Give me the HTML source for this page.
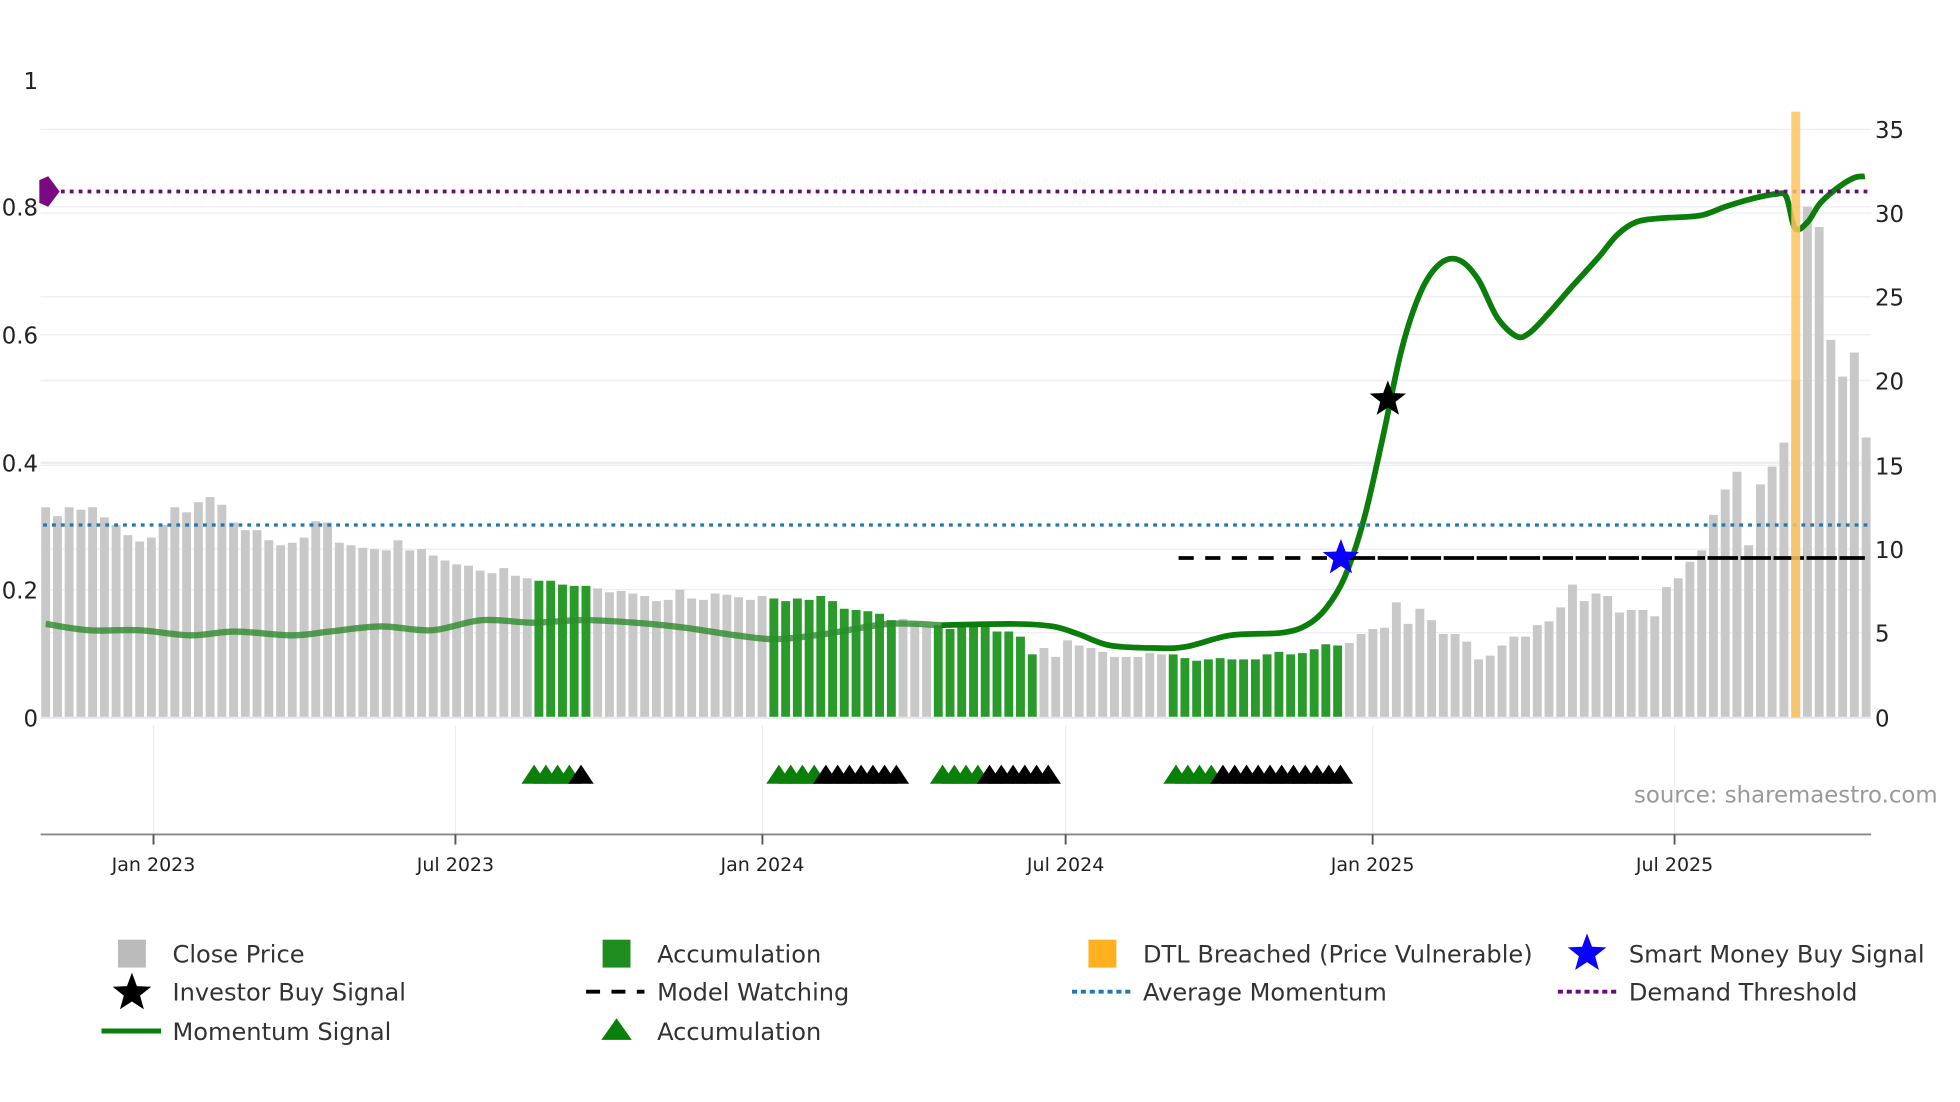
<!DOCTYPE html>
<html><head><meta charset="utf-8"><style>
html,body{margin:0;padding:0;background:#fff;}
svg{display:block;font-family:"DejaVu Sans","Liberation Sans",sans-serif;}
</style></head><body>
<svg id="s" width="1960" height="1102" viewBox="0 0 1545 869" preserveAspectRatio="none" xmlns="http://www.w3.org/2000/svg">
<g stroke="#eceef3" stroke-width="1">
<line x1="32" y1="102" x2="1475" y2="102"/><line x1="32" y1="168" x2="1475" y2="168"/><line x1="32" y1="234" x2="1475" y2="234"/><line x1="32" y1="300" x2="1475" y2="300"/><line x1="32" y1="367" x2="1475" y2="367"/><line x1="32" y1="433" x2="1475" y2="433"/><line x1="32" y1="499" x2="1475" y2="499"/>
<line x1="32" y1="163" x2="1475" y2="163"/><line x1="32" y1="264" x2="1475" y2="264"/><line x1="32" y1="365" x2="1475" y2="365" stroke-width="2"/><line x1="32" y1="465" x2="1475" y2="465"/>
<line x1="121" y1="572" x2="121" y2="658"/><line x1="359" y1="572" x2="359" y2="658"/><line x1="601" y1="572" x2="601" y2="658"/><line x1="840" y1="572" x2="840" y2="658"/><line x1="1082" y1="572" x2="1082" y2="658"/><line x1="1320" y1="572" x2="1320" y2="658"/>
</g>
<g id="bars"></g>
<line x1="32" y1="566" x2="1475" y2="566" stroke="#e6e8ee" stroke-width="1.5"/>
<path id="mfade" fill="none" stroke="#2e8b2e" stroke-opacity="0.8" stroke-width="5"/>
<path id="msolid" fill="none" stroke="#0a7d0a" stroke-width="4.5" stroke-linejoin="round"/>
<line x1="34" y1="414" x2="1472" y2="414" stroke="#1f77b4" stroke-width="2.5" stroke-dasharray="3,4"/>
<line x1="34" y1="151" x2="1472" y2="151" stroke="#6a0a7a" stroke-width="3" stroke-dasharray="3,4"/>
<path d="M31,142 L38,139 L47,151 L38,163 L31,160 Z" fill="#7a0a80"/>
<line x1="929" y1="440" x2="1060" y2="440" stroke="#000" stroke-width="3" stroke-dasharray="12,9"/>
<line x1="1060" y1="440" x2="1470" y2="440" stroke="#000" stroke-width="3" stroke-dasharray="24,2"/>
<rect x="1412" y="88" width="7" height="478" fill="#ffc45e" opacity="0.85"/>
<g id="tri"></g>
<path id="bstar" fill="#000"/>
<path id="blstar" fill="#0a00ff"/>
<line x1="32" y1="658" x2="1475" y2="658" stroke="#888" stroke-width="1.5"/>
<g stroke="#555" stroke-width="1.5"><line x1="121" y1="658" x2="121" y2="666"/><line x1="359" y1="658" x2="359" y2="666"/><line x1="601" y1="658" x2="601" y2="666"/><line x1="840" y1="658" x2="840" y2="666"/><line x1="1082" y1="658" x2="1082" y2="666"/><line x1="1320" y1="658" x2="1320" y2="666"/></g>
<g font-size="15" fill="#222" text-anchor="middle">
<text x="121" y="687">Jan 2023</text><text x="359" y="687">Jul 2023</text><text x="601" y="687">Jan 2024</text><text x="840" y="687">Jul 2024</text><text x="1082" y="687">Jan 2025</text><text x="1320" y="687">Jul 2025</text>
</g>
<g font-size="18" fill="#222" text-anchor="end">
<text x="30" y="70">1</text><text x="30" y="170">0.8</text><text x="30" y="271">0.6</text><text x="30" y="372">0.4</text><text x="30" y="472">0.2</text><text x="30" y="573">0</text>
</g>
<g font-size="18" fill="#222">
<text x="1478" y="109">35</text><text x="1478" y="175">30</text><text x="1478" y="241">25</text><text x="1478" y="307">20</text><text x="1478" y="374">15</text><text x="1478" y="440">10</text><text x="1478" y="506">5</text><text x="1478" y="573">0</text>
</g>
<text x="1288" y="633" font-size="18" fill="#999">source: sharemaestro.com</text>
<g font-size="19" fill="#333">
<rect x="93" y="741" width="22" height="22" fill="#bbb"/><text x="136" y="759">Close Price</text>
<rect x="475" y="741" width="22" height="22" fill="#1e8c1e"/><text x="518" y="759">Accumulation</text>
<rect x="858" y="741" width="22" height="22" fill="#ffb020"/><text x="901" y="759">DTL Breached (Price Vulnerable)</text>
<path id="lstar1" fill="#0a00ff"/><text x="1284" y="759">Smart Money Buy Signal</text>
<path id="lstar2" fill="#000"/><text x="136" y="789">Investor Buy Signal</text>
<line x1="462" y1="782" x2="508" y2="782" stroke="#000" stroke-width="3" stroke-dasharray="11,9"/><text x="518" y="789">Model Watching</text>
<line x1="845" y1="782" x2="891" y2="782" stroke="#1f77b4" stroke-width="3" stroke-dasharray="4,3"/><text x="901" y="789">Average Momentum</text>
<line x1="1228" y1="782" x2="1274" y2="782" stroke="#6a0a7a" stroke-width="3" stroke-dasharray="4,3"/><text x="1284" y="789">Demand Threshold</text>
<line x1="80" y1="813" x2="127" y2="813" stroke="#0a7d0a" stroke-width="4"/><text x="136" y="820">Momentum Signal</text>
<path d="M474,820 L486,803 L498,820 Z" fill="#0a800a"/><text x="518" y="820">Accumulation</text>
</g>
</svg>
<script>
var NS="http://www.w3.org/2000/svg";
var tops=[400,407,400,402,400,408,414,422,427,424,
414,400,404,396,392,398,412,418,
418,426,430,428,424,411,412,428,430,432,433,434,
426,434,433,438,442,445,446,450,452,448,454,456,
458,458,461,462,462,
464,467,466,468,470,474,473,465,472,473,468,469,471,473,470,
472,474,472,473,470,474,480,481,482,484,489,
488,491,494,
493,496,494,494,494,498,498,502,516,
511,518,505,509,511,514,518,518,518,515,516,
516,519,521,520,519,520,520,520,516,514,516,515,512,508,509,
507,500,496,495,475,492,480,489,500,500,506,520,517,509,502,502,493,490,479,461,474,468,470,483,481,481,486,463,456,443,434,406,386,372,430,382,368,349,300,163,179,268,297,278,345];
function green(i){return (i>=42&&i<=46)||(i>=62&&i<=72)||(i>=76&&i<=84)||(i>=96&&i<=110);}
var step=(1471-36)/155,gp="",cp="";
for(var i=0;i<tops.length;i++){var x=36+i*step-3.5;var seg="M"+x.toFixed(1)+",566V"+tops[i]+"h7V566z";if(green(i))gp+=seg;else cp+=seg;}
var b=document.getElementById("bars");
b.innerHTML='<path d="'+cp+'" fill="#c8c8c8"/><path d="'+gp+'" fill="#2a9a2a"/>';
function sm(p){var d="M"+p[0][0]+","+p[0][1];for(var i=1;i<p.length;i++){var p0=p[i-2]||p[i-1],p1=p[i-1],p2=p[i],p3=p[i+1]||p2;
d+=" C"+(p1[0]+(p2[0]-p0[0])/6).toFixed(1)+","+(p1[1]+(p2[1]-p0[1])/6).toFixed(1)+" "+(p2[0]-(p3[0]-p1[0])/6).toFixed(1)+","+(p2[1]-(p3[1]-p1[1])/6).toFixed(1)+" "+p2[0]+","+p2[1];}return d;}
var f=[[36,492],[70,497],[110,497],[150,501],[185,498],[230,501],[260,498],[300,494],[340,497],[380,489],[420,491],[460,489],[500,491],[540,495],[580,501],[612,504],[650,500],[700,492],[742,493]];
var s=[[742,493],[800,492],[830,494],[850,500],[875,509],[910,511],[935,510],[970,501],[1010,499],[1030,493],[1045,480],[1060,455],[1075,410],[1090,345],[1105,275],[1120,230],[1135,208],[1150,205],[1165,220],[1180,250],[1195,265],[1205,263],[1220,248],[1240,225],[1260,203],[1275,185],[1290,175],[1310,172],[1340,170],[1360,163],[1380,157],[1400,153],[1408,155],[1415,180],[1425,175],[1435,160],[1450,147],[1462,140],[1470,139]];
document.getElementById("mfade").setAttribute("d",sm(f));
document.getElementById("msolid").setAttribute("d",sm(s));
function star(cx,cy,R){var r=R*0.42,d="";for(var k=0;k<10;k++){var a=-Math.PI/2+k*Math.PI/5,rr=k%2?r:R;d+=(k?"L":"M")+(cx+rr*Math.cos(a)).toFixed(1)+","+(cy+rr*Math.sin(a)).toFixed(1);}return d+"Z";}
document.getElementById("bstar").setAttribute("d",star(1094,315,15));
document.getElementById("blstar").setAttribute("d",star(1057,440,15));
document.getElementById("lstar1").setAttribute("d",star(1251,752,16));
document.getElementById("lstar2").setAttribute("d",star(104,783,16));
var groups=[[421,4,1],[614,4,7],[743,4,6],[927,4,11]],t="";
for(var g=0;g<groups.length;g++){var x0=groups[g][0],ng=groups[g][1],nb=groups[g][2];
for(var k=0;k<ng+nb;k++){var cx=x0+k*9.26;var col=k<ng?"#0a800a":"#000";
t+='<path d="M'+(cx-10).toFixed(1)+',618L'+cx.toFixed(1)+',603L'+(cx+10).toFixed(1)+',618Z" fill="'+col+'"/>';}}
document.getElementById("tri").innerHTML=t;
</script>
</body></html>
